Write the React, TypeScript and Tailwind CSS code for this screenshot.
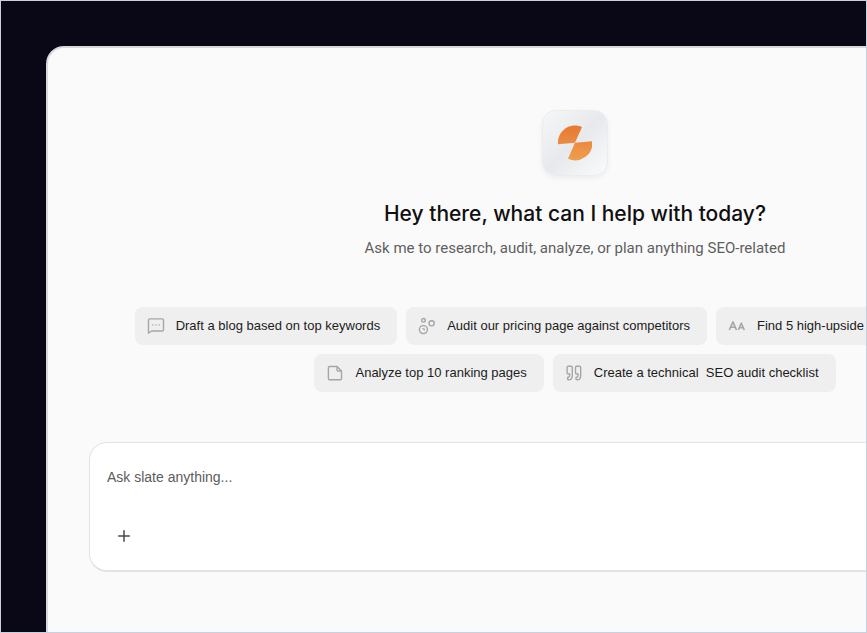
import type { ReactNode } from 'react'
import { Plus } from 'lucide-react'

const ChatIcon = () => (
  <svg viewBox="0 0 18 18" className="h-[18px] w-[18px]" fill="none" stroke="currentColor" strokeWidth="1.4" strokeLinejoin="round">
    <path d="M1.5 16.2V3.2Q1.5 1.9 2.8 1.9H15.2Q16.5 1.9 16.5 3.2V12.7Q16.5 14 15.2 14H4.6Z" />
    <path d="M5.7 7.9h.2M8.9 7.9h.2M12.1 7.9h.2" strokeLinecap="round" />
  </svg>
)

const CirclesIcon = () => (
  <svg viewBox="0 0 18 18" className="h-[18px] w-[18px]" fill="none" stroke="currentColor" strokeWidth="1.4">
    <circle cx="5.5" cy="3.3" r="1.8" />
    <circle cx="13.6" cy="6.3" r="2.6" />
    <circle cx="5.4" cy="12.6" r="4" />
    <path d="M5 11.6q1.3 0 1.4 1.3" strokeLinecap="round" />
  </svg>
)

const LettersIcon = () => (
  <svg viewBox="0 0 18 18" className="h-[18px] w-[18px]" fill="none" stroke="currentColor" strokeWidth="1.6" strokeLinejoin="round">
    <path d="M1.3 13L4.9 4.9L8.5 13M2.6 10.3H7.2" />
    <path d="M10.3 13L13.3 6.2L16.3 13M11.4 10.8H15.2" />
  </svg>
)

const PageIcon = () => (
  <svg viewBox="0 0 18 18" className="h-[18px] w-[18px]" fill="none" stroke="currentColor" strokeWidth="1.4" strokeLinejoin="round">
    <path d="M3.6 2.5H11L15.5 7V14.5Q15.5 15.7 14.3 15.7H3.6Q2.4 15.7 2.4 14.5V3.7Q2.4 2.5 3.6 2.5Z" />
    <path d="M11 2.5V5.8Q11 7 12.2 7H15.5" />
  </svg>
)

const QuoteIcon = () => (
  <svg viewBox="0 0 18 18" className="h-[18px] w-[18px]" fill="none" stroke="currentColor" strokeWidth="1.4" strokeLinejoin="round">
    <path d="M3.3 2.3H6.1Q7.3 2.3 7.3 3.5V11.4Q7.3 15.7 3.5 15.7Q2.6 15.7 2.6 14.8V13.9Q2.6 13.1 3.5 13Q4.7 12.7 4.7 11.4V10H3.3Q2.1 10 2.1 8.8V3.5Q2.1 2.3 3.3 2.3Z" />
    <path d="M11.7 2.3H14.5Q15.7 2.3 15.7 3.5V11.4Q15.7 15.7 11.9 15.7Q11 15.7 11 14.8V13.9Q11 13.1 11.9 13Q13.1 12.7 13.1 11.4V10H11.7Q10.5 10 10.5 8.8V3.5Q10.5 2.3 11.7 2.3Z" />
  </svg>
)

const Logo = () => (
  <div className="flex h-[66px] w-[66px] items-center justify-center rounded-[14px] border border-[#ebecef] bg-linear-to-br from-[#f6f7f8] via-[#e8e9ec] to-[#fafbfc] shadow-[0_2px_5px_rgba(0,0,0,0.06)]">
    <svg viewBox="0 0 34 36" className="h-9 w-[34px]" aria-hidden="true">
      <defs>
        <linearGradient id="mark" x1="0" y1="0" x2="0" y2="36" gradientUnits="userSpaceOnUse">
          <stop offset="0" stopColor="#e87731" />
          <stop offset="1" stopColor="#ef9f50" />
        </linearGradient>
      </defs>
      <path d="M17 17.7L0 19.2A17.2 17.2 0 0 1 24 1.9Z" fill="url(#mark)" />
      <path d="M17 17.7L34.2 16.3A17.2 17.2 0 0 1 10 33.8Z" fill="url(#mark)" />
    </svg>
  </div>
)

type Prompt = { label: string; icon: ReactNode }

const firstRow: Prompt[] = [
  { label: 'Draft a blog based on top keywords', icon: <ChatIcon /> },
  { label: 'Audit our pricing page against competitors', icon: <CirclesIcon /> },
  { label: 'Find 5 high-upside keywords to target first', icon: <LettersIcon /> }
]

const secondRow: Prompt[] = [
  { label: 'Analyze top 10 ranking pages', icon: <PageIcon /> },
  { label: 'Create a technical  SEO audit checklist', icon: <QuoteIcon /> }
]

const PromptRow = ({ prompts }: { prompts: Prompt[] }) => (
  <div className="flex justify-center gap-[9px]">
    {prompts.map((prompt) => (
      <button
        key={prompt.label}
        type="button"
        className="flex h-[38px] shrink-0 items-center gap-[11px] rounded-lg bg-[#efefef] pr-[17px] pl-3 text-[13px] text-[#1c1c1c]"
      >
        <span className="text-[#a6a6a6]">{prompt.icon}</span>
        <span className="whitespace-pre">{prompt.label}</span>
      </button>
    ))}
  </div>
)

const App = () => {
  return (
    <div className="flex h-screen flex-col overflow-hidden border border-[#ccd0dc] bg-[#0a0717] pt-[45px] pl-[45px] font-['Liberation_Sans',Arial,sans-serif]">
      {/* The panel runs past the right edge of the frame */}
      <main className="-mr-[236px] flex-1 rounded-tl-[18px] border-t-2 border-l-2 border-[#d9d8dd] bg-[#fafafa] px-[41px]">
        <div className="flex flex-col items-center pt-[62px]">
          <Logo />
          <h1 className="mt-6 font-['Inter',sans-serif] text-[21px] leading-7 font-medium text-[#0f0f0f]">Hey there, what can I help with today?</h1>
          <p className="mt-[10px] font-['Roboto',sans-serif] text-[15px] leading-5 text-[#5f5f5f]">Ask me to research, audit, analyze, or plan anything SEO-related</p>
        </div>

        <div className="mt-[49px] flex flex-col gap-[9px]">
          <PromptRow prompts={firstRow} />
          <PromptRow prompts={secondRow} />
        </div>

        <form className="mt-[50px] flex h-[130px] flex-col justify-between rounded-[18px] border border-b-2 border-[#e3e3e4] bg-white px-[17px] pt-6 pb-[22px]">
          <textarea
            aria-label="Message"
            rows={1}
            placeholder="Ask slate anything..."
            className="w-full resize-none bg-transparent text-[14px] leading-5 outline-none placeholder:text-[#5c5c5c]"
          />
          <button type="button" aria-label="Add attachment" className="flex h-6 w-[34px] items-center justify-center text-[#4a4a4a]">
            <Plus className="h-[18px] w-[18px]" strokeWidth={2} />
          </button>
        </form>
      </main>
    </div>
  )
}

export default App
